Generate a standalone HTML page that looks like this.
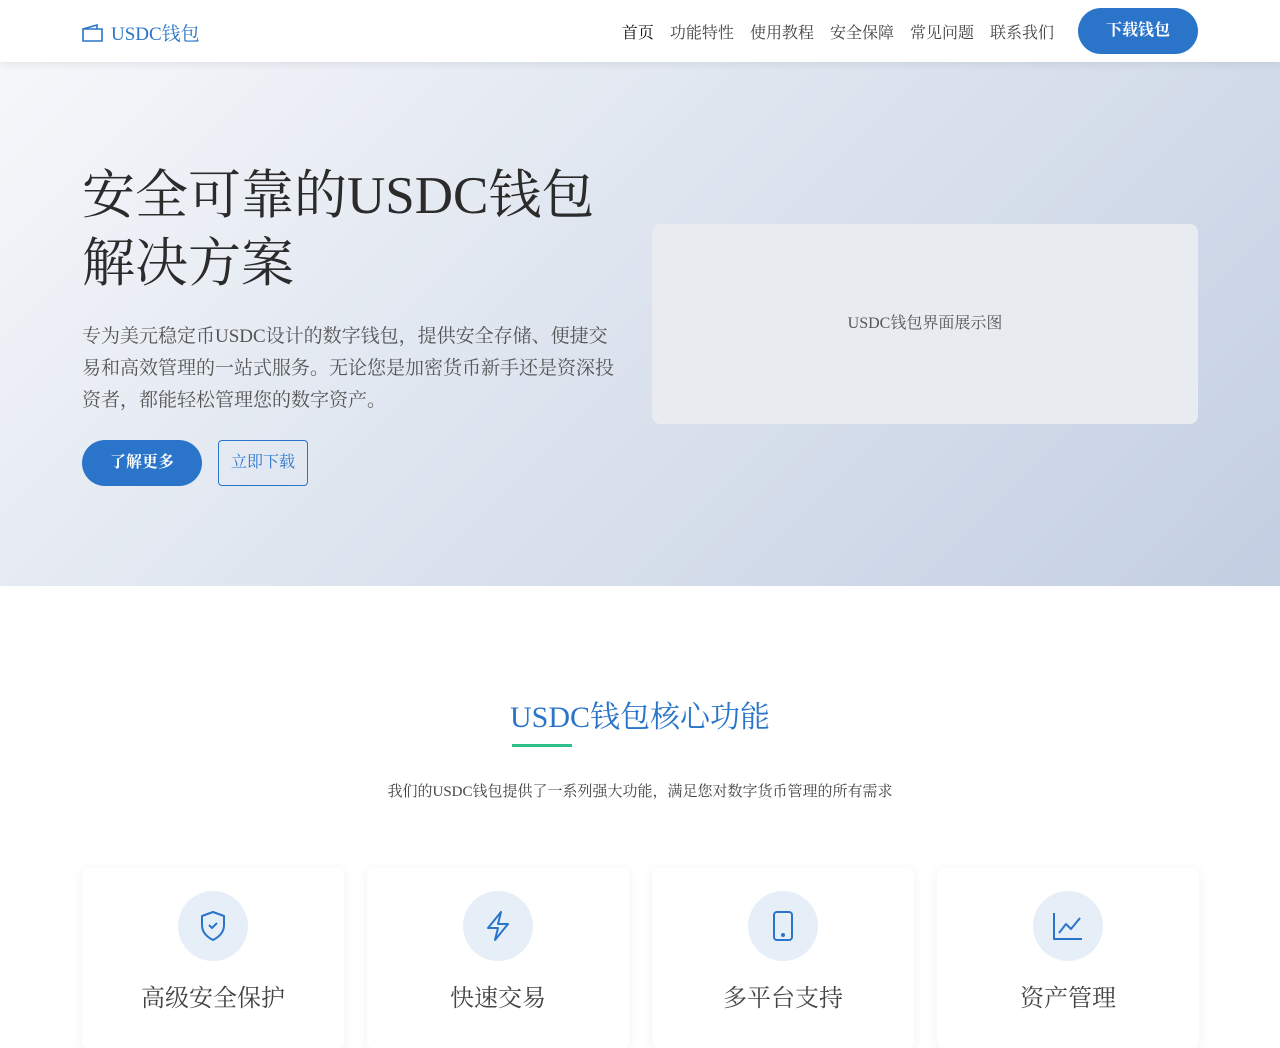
<!DOCTYPE html>
<html><head><meta charset="utf-8"><style>
*{margin:0;padding:0;box-sizing:border-box}
body{width:1280px;height:1024px;overflow:hidden;font-family:"Liberation Serif","Noto Serif CJK SC",serif;background:#fff;color:#333}
nav{height:62px;background:#fff;box-shadow:0 2px 8px rgba(0,0,0,.08);position:relative;z-index:2}
.logo{position:absolute;left:82px;top:19px;color:#2a75c9;font-size:19px;display:flex;align-items:center;gap:8px}
.menu{position:absolute;right:226px;top:20px;font-size:16px;display:flex;gap:16px;color:#444}
.menu span:first-child{color:#111}
.dl{position:absolute;left:1078px;top:8px;width:120px;height:46px;border-radius:23px;background:#2a75c9;color:#fff;font-size:16px;font-weight:bold;text-align:center;line-height:46px}
.hero{height:524px;background:linear-gradient(135deg,#f5f7fa 0%,#c3cfe2 100%);position:relative}
h1{position:absolute;left:82px;top:100px;font-size:53px;font-weight:normal;line-height:68px;color:#2b2b2b}
.p{position:absolute;left:82px;top:259px;width:534px;font-size:19px;line-height:32px;color:#555}
.b1{position:absolute;left:82px;top:378px;width:120px;height:46px;border-radius:23px;background:#2a75c9;color:#fff;font-size:16px;font-weight:bold;text-align:center;line-height:46px}
.b2{position:absolute;left:218px;top:378px;width:90px;height:46px;border:1px solid #2a75c9;border-radius:4px;color:#2a75c9;font-size:16px;text-align:center;padding-top:8px}
.img{position:absolute;left:652px;top:162px;width:546px;height:200px;background:#e8ebef;border-radius:8px;text-align:center;line-height:200px;font-size:16px;color:#555}
.st{position:absolute;top:692px;width:1280px;text-align:center;font-size:30px;color:#2a75c9}
.ul{position:absolute;left:512px;top:744px;width:60px;height:3px;background:#2ec08a}
.sub{position:absolute;top:780px;width:1280px;text-align:center;font-size:15px;color:#444}
.card{position:absolute;top:868px;width:262px;height:180px;background:#fff;box-shadow:0 2px 12px rgba(0,0,0,.06);border-radius:6px;text-align:center}
.ic{width:70px;height:70px;border-radius:50%;background:#e6eef8;margin:23px auto 0;display:flex;align-items:center;justify-content:center}
.card h3{font-weight:normal;font-size:24px;color:#444;margin-top:17px}
</style></head><body>
<nav>
<div class="logo"><svg width="21" height="18" viewBox="0 0 21 18" fill="none" stroke="#2a75c9" stroke-width="1.6"><path d="M1 5h19v12H1z"/><path d="M1 5l14-4v4"/></svg>USDC钱包</div>
<div class="menu"><span>首页</span><span>功能特性</span><span>使用教程</span><span>安全保障</span><span>常见问题</span><span>联系我们</span></div>
<div class="dl">下载钱包</div>
</nav>
<div class="hero">
<h1>安全可靠的USDC钱包<br>解决方案</h1>
<div class="p">专为美元稳定币USDC设计的数字钱包，提供安全存储、便捷交易和高效管理的一站式服务。无论您是加密货币新手还是资深投资者，都能轻松管理您的数字资产。</div>
<div class="b1">了解更多</div>
<div class="b2">立即下载</div>
<div class="img">USDC钱包界面展示图</div>
</div>
<div class="st">USDC钱包核心功能</div>
<div class="ul"></div>
<div class="sub">我们的USDC钱包提供了一系列强大功能，满足您对数字货币管理的所有需求</div>
<div class="card" style="left:82px"><div class="ic"><svg width="28" height="32" viewBox="0 0 28 32" fill="none" stroke="#2a75c9" stroke-width="2" stroke-linejoin="round"><path d="M14 2L3 6v9c0 7 5 12 11 15 6-3 11-8 11-15V6z"/><path d="M10 15l3 3 5-5"/></svg></div><h3>高级安全保护</h3></div>
<div class="card" style="left:367px"><div class="ic"><svg width="26" height="32" viewBox="0 0 26 32" fill="none" stroke="#2a75c9" stroke-width="2" stroke-linejoin="round"><path d="M16 2L3 18h10l-3 12 13-16H13z"/></svg></div><h3>快速交易</h3></div>
<div class="card" style="left:652px"><div class="ic"><svg width="22" height="32" viewBox="0 0 22 32" fill="none" stroke="#2a75c9" stroke-width="2"><rect x="2" y="2" width="18" height="28" rx="3"/><circle cx="11" cy="25" r="1" fill="#2a75c9"/></svg></div><h3>多平台支持</h3></div>
<div class="card" style="left:937px"><div class="ic"><svg width="32" height="30" viewBox="0 0 32 30" fill="none" stroke="#2a75c9" stroke-width="2" stroke-linejoin="round"><path d="M2 2v26h28"/><path d="M7 22l7-9 5 5 9-11"/></svg></div><h3>资产管理</h3></div>
</body></html>
